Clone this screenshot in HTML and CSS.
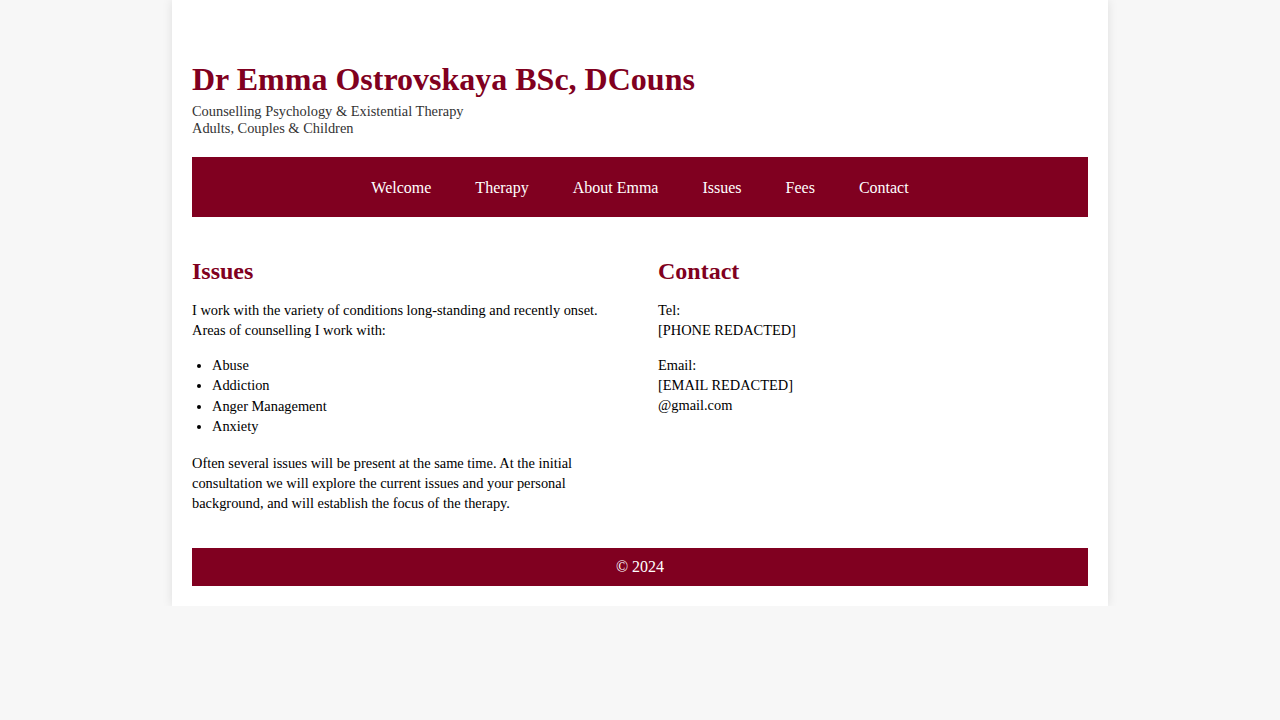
FILE: index.html
```html
<!DOCTYPE html>
<html lang="en">
<head>
<meta charset="utf-8">
<title>Dr Emma Ostrovskaya</title>
<link rel="stylesheet" href="styles.css">
</head>
<body>
<div class="page">
  <header class="site-header">
    <h1 class="site-title">Dr Emma Ostrovskaya BSc, DCouns</h1>
    <p class="tagline">Counselling Psychology &amp; Existential Therapy<br>Adults, Couples &amp; Children</p>
  </header>
  <nav class="main-nav">
    <a href="#">Welcome</a>
    <a href="#">Therapy</a>
    <a href="#">About Emma</a>
    <a href="#">Issues</a>
    <a href="#">Fees</a>
    <a href="#">Contact</a>
  </nav>
  <main class="content">
    <section class="column">
      <h2 class="section-title">Issues</h2>
      <p>I work with the variety of conditions long-standing and recently onset. Areas of counselling I work with:</p>
      <ul class="issue-list">
        <li>Abuse</li>
        <li>Addiction</li>
        <li>Anger Management</li>
        <li>Anxiety</li>
      </ul>
      <p>Often several issues will be present at the same time. At the initial consultation we will explore the current issues and your personal background, and will establish the focus of the therapy.</p>
    </section>
    <section class="column">
      <h2 class="section-title">Contact</h2>
      <p>Tel:<br>[PHONE REDACTED]</p>
      <p>Email:<br>[EMAIL REDACTED]<br>@gmail.com</p>
    </section>
  </main>
  <footer class="site-footer">© 2024</footer>
</div>
</body>
</html>
```
FILE: styles.css
```css
html, body {
  margin: 0;
  padding: 0;
}
body {
  background: #f7f7f7;
  font-family: "Liberation Serif", "Times New Roman", serif;
  color: #000;
}
.page {
  width: 896px;
  margin: 0 auto;
  padding: 20px;
  background: #fff;
  box-shadow: 0 0 10px rgba(0, 0, 0, 0.1);
}
.site-header {
  padding-top: 41px;
}
.site-title {
  margin: 0 0 5px;
  font-size: 32px;
  font-weight: bold;
  color: #800020;
  line-height: normal;
}
.tagline {
  margin: 0;
  font-size: 14.4px;
  line-height: 17px;
  color: #333;
}
.main-nav {
  margin-top: 20px;
  background: #800020;
  padding: 21px 0 19px;
  display: flex;
  justify-content: center;
  gap: 44px;
}
.main-nav a {
  color: #fff;
  text-decoration: none;
  font-size: 16px;
  line-height: 20px;
}
.content {
  display: grid;
  grid-template-columns: 430px 430px;
  column-gap: 36px;
  padding: 41px 0 20px;
}
.section-title {
  margin: 0 0 15px;
  font-size: 24px;
  font-weight: bold;
  color: #800020;
  line-height: normal;
}
.column p {
  margin: 0 0 15px;
  font-size: 14.4px;
  line-height: 20px;
}
.issue-list {
  margin: 0 0 17px;
  padding-left: 20px;
  font-size: 14.4px;
  line-height: 20.3px;
}
.site-footer {
  background: #800020;
  color: #fff;
  text-align: center;
  font-size: 16px;
  line-height: 20px;
  padding: 9px 0;
}
```
